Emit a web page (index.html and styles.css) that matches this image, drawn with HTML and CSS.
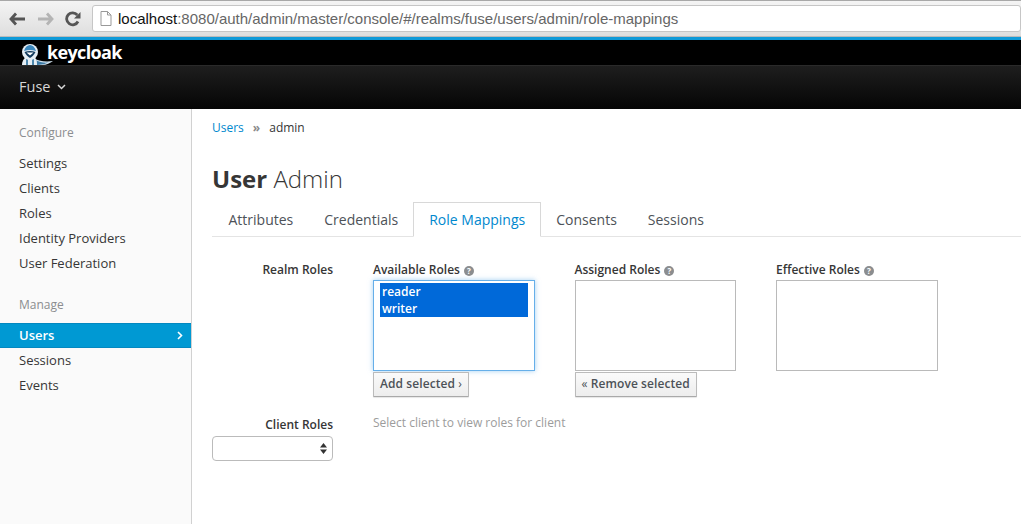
FILE: index.html
```html
<!DOCTYPE html>
<html>
  <head>
    <meta charset="UTF-8">
    <title>Keycloak Admin Console</title>
    <link rel="stylesheet" href="styles.css">
  </head>
  <body>
    <!-- browser toolbar -->
    <div class="browser-bar">
      <svg class="tool-icon" width="17" height="14" viewBox="0 0 17 14"><path d="M7 1.500 2 7l5 5.500M2.500 7H16" fill="none" stroke="#555" stroke-width="2.800"/></svg>
      <svg class="tool-icon" width="17" height="14" viewBox="0 0 17 14"><path d="M10 1.500 15 7l-5 5.500M14.500 7H1" fill="none" stroke="#b4b4b4" stroke-width="2.800"/></svg>
      <svg class="tool-icon" width="16" height="16" viewBox="0 0 16 16"><path d="M13 10.500A6 6 0 1 1 12.300 4" fill="none" stroke="#555" stroke-width="2.800"/><path d="M15.500 1v6.500H9z" fill="#555"/></svg>
      <div class="url-box">
        <svg class="page-icon" width="12" height="15" viewBox="0 0 12 15"><path d="M1 .5h6.500L11 4v10.500H1zM7.500 .5V4H11" fill="#fff" stroke="#999"/></svg>
        <span class="url-host">localhost</span><span class="url-rest">:8080/auth/admin/master/console/#/realms/fuse/users/admin/role-mappings</span>
      </div>
    </div>

    <div class="top-line"></div>
    <div class="brand-bar">
      <svg class="logo-icon" width="34" height="25" viewBox="0 0 34 25">
        <!-- cape -->
        <path d="M13 18c5 3 12 4 20 3-3 2-6 4-11 4H13z" fill="#cfe0ec"/>
        <path d="M15 20c4 2 9 3 13 2.500-3 1.500-6 2.500-13 2.500z" fill="#3d7ba6"/>
        <!-- body -->
        <path d="M2 25c0-3 1-6 4-8h8c3 2 3 5 3 8z" fill="#e6eef4"/>
        <path d="M6 19h2v6H6zM12 19h2v6h-2z" fill="#4d87ad"/>
        <!-- hood -->
        <ellipse cx="10" cy="12" rx="8" ry="8" fill="#e6eef4"/>
        <path d="M4 11c1-4 3.500-6 6-6s5 2 6 6c-4-1.500-8-1.500-12 0z" fill="#3a87bd"/>
        <path d="M4.500 12c3.500-1.200 7.500-1.200 11 0-1.500 3-3.500 5-5.500 6-2-1-4-3-5.500-6z" fill="#123a5c"/>
        <path d="M6.500 12.500h7L10 15.500z" fill="#fff"/>
      </svg>
      <span class="logo-text">keycloak</span>
    </div>
    <div class="realm-bar">
      <span class="realm-name">Fuse</span>
      <svg width="9" height="6" viewBox="0 0 9 6"><path d="M1 1l3.500 3.500L8 1" fill="none" stroke="#d8d8d8" stroke-width="1.500"/></svg>
    </div>

    <div class="page">
      <div class="sidebar">
        <h4 class="side-title">Configure</h4>
        <a class="side-link">Settings</a>
        <a class="side-link">Clients</a>
        <a class="side-link">Roles</a>
        <a class="side-link">Identity Providers</a>
        <a class="side-link">User Federation</a>
        <h4 class="side-title second">Manage</h4>
        <a class="side-link active">Users
          <svg width="6" height="9" viewBox="0 0 6 9"><path d="M1 1l3.500 3.500L1 8" fill="none" stroke="#fff" stroke-width="1.600"/></svg>
        </a>
        <a class="side-link">Sessions</a>
        <a class="side-link">Events</a>
      </div>

      <div class="content">
        <div class="breadcrumb"><a>Users</a><span class="sep">&raquo;</span><span>admin</span></div>
        <h1 class="page-title"><strong>User</strong> Admin</h1>

        <ul class="tabs">
          <li>Attributes</li>
          <li>Credentials</li>
          <li class="active">Role Mappings</li>
          <li>Consents</li>
          <li>Sessions</li>
        </ul>

        <div class="role-row">
          <div class="row-label">Realm Roles</div>
          <div class="role-col">
            <div class="col-label">Available Roles <span class="help">?</span></div>
            <div class="list-box focused">
              <div class="option">reader</div>
              <div class="option">writer</div>
            </div>
            <button class="move-btn">Add selected <span class="chev">&rsaquo;</span></button>
          </div>
          <div class="role-col">
            <div class="col-label">Assigned Roles <span class="help">?</span></div>
            <div class="list-box"></div>
            <button class="move-btn"><span class="chev">&laquo;</span> Remove selected</button>
          </div>
          <div class="role-col">
            <div class="col-label">Effective Roles <span class="help">?</span></div>
            <div class="list-box"></div>
          </div>
        </div>

        <div class="client-row">
          <div class="client-pick">
            <div class="client-label">Client Roles</div>
            <div class="fake-select">
              <svg width="7" height="11" viewBox="0 0 7 11"><path d="M3.500 0 7 4.500H0zM3.500 11 0 6.500h7z" fill="#333"/></svg>
            </div>
          </div>
          <div class="client-hint">Select client to view roles for client</div>
        </div>
      </div>
    </div>
  </body>
</html>
```

FILE: styles.css
```css
* {
  box-sizing: border-box;
}

html, body {
  height: 100%;
}

body {
  margin: 0;
  overflow: hidden;
  font-family: "Open Sans", sans-serif;
  font-size: 13px;
  color: #363636;
  background-color: #fff;
}

/* Browser toolbar */
.browser-bar {
  display: flex;
  align-items: center;
  height: 37px;
  padding: 0 0 0 9px;
  gap: 11px;
  background: linear-gradient(#f4f4f4, #dedede);
  border-top: 1px solid #a8a8a8;
  border-bottom: 1px solid #bbb;
}

.url-box {
  display: flex;
  align-items: center;
  flex: 1;
  height: 27px;
  padding-left: 7px;
  background-color: #fff;
  border: 1px solid #c6c6c6;
  border-radius: 3px;
  font-family: "Liberation Sans", sans-serif;
  font-size: 15px;
  white-space: nowrap;
}

.page-icon {
  margin-right: 6px;
}

.url-host {
  color: #111;
}

.url-rest {
  color: #666;
}

/* Keycloak header */
.top-line {
  height: 3px;
  background-color: #0f9ad8;
}

.brand-bar {
  display: flex;
  align-items: flex-start;
  height: 25px;
  padding-left: 20px;
  overflow: hidden;
  background-color: #000;
}

.logo-icon {
  flex: none;
}

.logo-text {
  margin-left: -7px;
  font-family: "Open Sans", sans-serif;
  font-size: 18px;
  font-weight: 700;
  line-height: 25px;
  letter-spacing: -0.650px;
  color: #fff;
}

.realm-bar {
  display: flex;
  align-items: center;
  gap: 7px;
  height: 44px;
  padding: 0 0 2px 19px;
  background: linear-gradient(#1e1e1e, #050505);
  border-top: 1px solid #2a2a2a;
}

.realm-name {
  font-size: 14.500px;
  font-weight: 400;
  color: #d8d8d8;
}

/* Page */
.page {
  display: flex;
  height: 415px;
}

.sidebar {
  flex: none;
  width: 192px;
  padding-top: 15px;
  background-color: #fafafa;
  border-right: 1px solid #d1d1d1;
}

.side-title {
  margin: 0 0 9px;
  padding-left: 19px;
  font-size: 12px;
  font-weight: 400;
  line-height: 18px;
  color: #8b8d8f;
}

.side-title.second {
  margin-top: 20px;
}

.side-link {
  display: flex;
  align-items: center;
  justify-content: space-between;
  height: 25px;
  padding: 0 8px 0 19px;
  line-height: 25px;
  color: #363636;
}

.side-link.active {
  margin: 6px 0 0;
  font-weight: 600;
  color: #fff;
  background-color: #0099d3;
  border-top: 1px solid #0388c0;
  border-bottom: 1px solid #0388c0;
}

.content {
  flex: 1;
  padding: 10px 0 0 20px;
  min-width: 0;
}

.breadcrumb {
  display: flex;
  gap: 9px;
  font-size: 12px;
  line-height: 18px;
}

.breadcrumb a {
  color: #0088ce;
}

.breadcrumb .sep {
  font-weight: 700;
  color: #8b8b8b;
}

.page-title {
  margin: 25px 0 0;
  font-size: 24px;
  font-weight: 300;
  line-height: 33px;
  color: #363636;
}

.page-title strong {
  font-weight: 700;
}

.tabs {
  display: flex;
  margin: 7px 0 0;
  padding: 0 0 0 1px;
  height: 35px;
  list-style: none;
  font-size: 14px;
  border-bottom: 1px solid #e4e4e4;
}

.tabs li {
  height: 35px;
  padding: 0 14.500px;
  line-height: 34px;
  border: 1px solid transparent;
  color: #4d5258;
}

.tabs li.active {
  margin-left: -1px;
  padding-left: 15.500px;
  color: #0088ce;
  background-color: #fff;
  border-color: #d8d8d8 #d8d8d8 #fff;
}

/* Role lists */
.role-row {
  display: flex;
  margin-top: 24px;
}

.row-label {
  width: 121px;
  margin-right: 40px;
  font-size: 12px;
  font-weight: 600;
  line-height: 18px;
  text-align: right;
}

.role-col {
  width: 161.500px;
  margin-right: 40px;
}

.col-label {
  margin-bottom: 1px;
  font-size: 12px;
  font-weight: 600;
  line-height: 18px;
}

.help {
  display: inline-block;
  width: 10px;
  height: 10px;
  margin-left: 1px;
  border-radius: 50%;
  background-color: #8b8d8f;
  color: #fff;
  font-size: 8px;
  font-weight: 700;
  line-height: 10px;
  text-align: center;
  vertical-align: 0;
}

.list-box {
  height: 91px;
  padding: 2px 6px;
  background-color: #fff;
  border: 1px solid #bababa;
}

.list-box.focused {
  border-color: #66afe9;
  box-shadow: 0 0 5px rgba(102, 175, 233, 0.6);
}

.option {
  height: 17px;
  padding-left: 2px;
  font-size: 12px;
  font-weight: 600;
  line-height: 17px;
  color: #fff;
  background-color: #0069d9;
}

.move-btn {
  display: block;
  height: 25px;
  margin-top: 1px;
  padding: 0 6px 2px;
  font-family: "Open Sans", sans-serif;
  font-size: 12px;
  font-weight: 600;
  letter-spacing: 0.080px;
  color: #4d5258;
  background: linear-gradient(#fafafa, #ededed);
  border: 1px solid #bbb;
  border-bottom-color: #a9a9a9;
  border-radius: 1px;
  box-shadow: 0 1px 1px rgba(0, 0, 0, 0.1);
}

.chev {
  font-weight: 400;
}

.client-row {
  display: flex;
  margin-top: 17px;
}

.client-pick {
  width: 121px;
  margin-right: 40px;
}

.client-label {
  margin-top: 2px;
  font-size: 12px;
  font-weight: 600;
  line-height: 17px;
  text-align: right;
}

.fake-select {
  display: flex;
  align-items: center;
  justify-content: flex-end;
  height: 25px;
  margin-top: 3px;
  padding-right: 5px;
  background-color: #fff;
  border: 1px solid #bbb;
  border-radius: 4px;
}

.client-hint {
  font-size: 12px;
  line-height: 17px;
  color: #9c9c9c;
}
```
